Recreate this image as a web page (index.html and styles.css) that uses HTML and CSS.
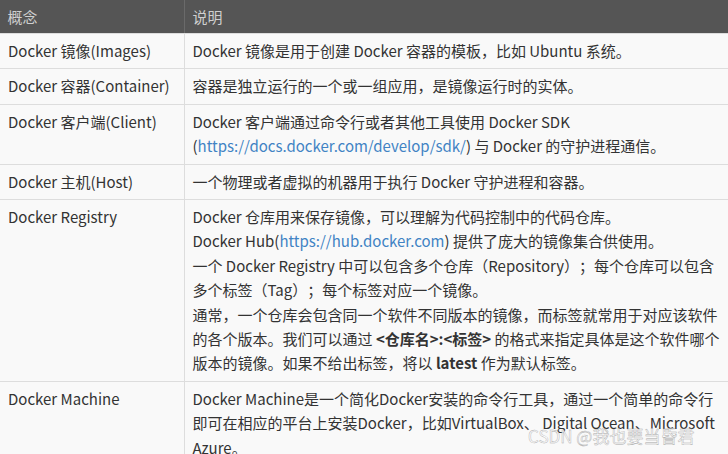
FILE: index.html
```html
<!DOCTYPE html>
<html lang="zh-CN">
<head>
<meta charset="utf-8">
<title>Docker 概念</title>
<link rel="stylesheet" href="styles.css">
</head>
<body>
<table class="tbl">
  <thead>
    <tr><th class="c1">概念</th><th class="c2">说明</th></tr>
  </thead>
  <tbody>
    <tr><td>Docker 镜像(Images)</td><td>Docker 镜像是用于创建 Docker 容器的模板，比如 Ubuntu 系统。</td></tr>
    <tr><td>Docker 容器(Container)</td><td>容器是独立运行的一个或一组应用，是镜像运行时的实体。</td></tr>
    <tr><td>Docker 客户端(Client)</td><td>Docker 客户端通过命令行或者其他工具使用 Docker SDK (<a href="#">https://docs.docker.com/develop/sdk/</a>) 与 Docker 的守护进程通信。</td></tr>
    <tr><td>Docker 主机(Host)</td><td>一个物理或者虚拟的机器用于执行 Docker 守护进程和容器。</td></tr>
    <tr><td>Docker Registry</td><td>Docker 仓库用来保存镜像，可以理解为代码控制中的代码仓库。<br>Docker Hub(<a href="#">https://hub.docker.com</a>) 提供了庞大的镜像集合供使用。<br>一个 Docker Registry 中可以包含多个仓库（Repository）；每个仓库可以包含多个标签（Tag）；每个标签对应一个镜像。<br>通常，一个仓库会包含同一个软件不同版本的镜像，而标签就常用于对应该软件的各个版本。我们可以通过 <b>&lt;仓库名&gt;:&lt;标签&gt;</b> 的格式来指定具体是这个软件哪个版本的镜像。如果不给出标签，将以 <b>latest</b> 作为默认标签。</td></tr>
    <tr><td>Docker Machine</td><td>Docker Machine是一个简化Docker安装的命令行工具，通过一个简单的命令行即可在相应的平台上安装Docker，比如VirtualBox、 Digital Ocean、Microsoft Azure。</td></tr>
  </tbody>
</table>
<div class="wm">CSDN @我也要当昏君</div>
</body>
</html>
```

FILE: styles.css
```css
html, body {
  margin: 0;
  padding: 0;
  background: #f9f9f9;
  overflow: hidden;
}
body {
  font-family: "Noto Sans CJK SC", "Noto Sans", sans-serif;
  font-size: 15px;
  color: #333;
  width: 728px;
  height: 454px;
  position: relative;
  text-spacing-trim: space-all;
}
.tbl {
  border-collapse: collapse;
  width: 738px;
  margin-left: -1px;
  table-layout: fixed;
}
.tbl th {
  background: #555;
  color: #cfcfcf;
  font-weight: normal;
  text-align: left;
  height: 33px;
  padding: 0 8px;
  line-height: 24px;
  border-right: 1px solid #6a6a6a;
  border-bottom: 1px solid #ddd;
}
.tbl .c1 { width: 168px; }
.tbl td {
  padding: 5px 8px;
  line-height: 24.4px;
  vertical-align: top;
  border: 1px solid #ddd;
  background: #f9f9f9;
}
.tbl a {
  color: #4183c4;
  text-decoration: none;
}
.tbl b { font-weight: bold; }
.wm {
  position: absolute;
  left: 528px;
  top: 423px;
  font-size: 17px;
  color: rgba(255,255,255,0.85);
  -webkit-text-stroke: 0.4px #a8a8a8;
}
```
